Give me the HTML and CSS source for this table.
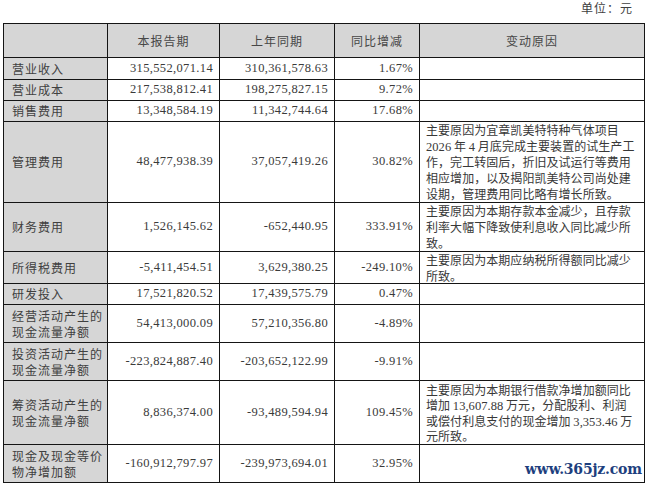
FILE: index.html
```html
<!DOCTYPE html>
<html lang="zh-CN">
<head>
<meta charset="utf-8">
<title>财务数据变动</title>
<link rel="stylesheet" href="styles.css">
</head>
<body>
<div class="page">
  <div class="unit">单位：元</div>
  <table class="fin">
    <colgroup>
      <col class="c1"><col class="c2"><col class="c3"><col class="c4"><col class="c5">
    </colgroup>
    <tr class="h-head">
      <th class="lab"></th><th>本报告期</th><th>上年同期</th><th>同比增减</th><th>变动原因</th>
    </tr>
    <tr class="h22">
      <td class="lab">营业收入</td><td class="num">315,552,071.14</td><td class="num">310,361,578.63</td><td class="num">1.67%</td><td class="why"></td>
    </tr>
    <tr class="h21">
      <td class="lab">营业成本</td><td class="num">217,538,812.41</td><td class="num">198,275,827.15</td><td class="num">9.72%</td><td class="why"></td>
    </tr>
    <tr class="h21">
      <td class="lab">销售费用</td><td class="num">13,348,584.19</td><td class="num">11,342,744.64</td><td class="num">17.68%</td><td class="why"></td>
    </tr>
    <tr class="h81">
      <td class="lab">管理费用</td><td class="num">48,477,938.39</td><td class="num">37,057,419.26</td><td class="num">30.82%</td>
      <td class="why">主要原因为宜章凯美特特种气体项目<br><span class="d">2026</span> 年 <span class="d">4</span> 月底完成主要装置的试生产工<br>作，完工转固后，折旧及试运行等费用<br>相应增加，以及揭阳凯美特公司尚处建<br>设期，管理费用同比略有增长所致。</td>
    </tr>
    <tr class="h49">
      <td class="lab">财务费用</td><td class="num">1,526,145.62</td><td class="num">-652,440.95</td><td class="num">333.91%</td>
      <td class="why">主要原因为本期存款本金减少，且存款<br>利率大幅下降致使利息收入同比减少所<br>致。</td>
    </tr>
    <tr class="h32">
      <td class="lab">所得税费用</td><td class="num">-5,411,454.51</td><td class="num">3,629,380.25</td><td class="num">-249.10%</td>
      <td class="why mid">主要原因为本期应纳税所得额同比减少<br>所致。</td>
    </tr>
    <tr class="h21">
      <td class="lab">研发投入</td><td class="num">17,521,820.52</td><td class="num">17,439,575.79</td><td class="num">0.47%</td><td class="why"></td>
    </tr>
    <tr class="h38">
      <td class="lab">经营活动产生的<br>现金流量净额</td><td class="num">54,413,000.09</td><td class="num">57,210,356.80</td><td class="num">-4.89%</td><td class="why"></td>
    </tr>
    <tr class="h38">
      <td class="lab">投资活动产生的<br>现金流量净额</td><td class="num">-223,824,887.40</td><td class="num">-203,652,122.99</td><td class="num">-9.91%</td><td class="why"></td>
    </tr>
    <tr class="h64">
      <td class="lab">筹资活动产生的<br>现金流量净额</td><td class="num">8,836,374.00</td><td class="num">-93,489,594.94</td><td class="num">109.45%</td>
      <td class="why mid">主要原因为本期银行借款净增加额同比<br>增加 <span class="d">13,607.88</span> 万元，分配股利、利润<br>或偿付利息支付的现金增加 <span class="d">3,353.46</span> 万<br>元所致。</td>
    </tr>
    <tr class="h38">
      <td class="lab">现金及现金等价<br>物净增加额</td><td class="num">-160,912,797.97</td><td class="num">-239,973,694.01</td><td class="num">32.95%</td><td class="why"></td>
    </tr>
  </table>
  <div class="mark">www.365jz.com</div>
</div>
</body>
</html>
```
FILE: styles.css
```css
html, body {
  margin: 0;
  padding: 0;
  background: #ffffff;
}
.page {
  position: relative;
  width: 648px;
  height: 486px;
  padding-left: 3px;
  box-sizing: border-box;
  font-family: "Noto Sans CJK SC", "Noto Sans", sans-serif;
  color: #404040;
  font-size: 12px;
}
.unit {
  height: 23px;
  line-height: 16px;
  text-align: right;
  padding-right: 15px;
  letter-spacing: 1px;
  color: #404040;
}
.fin {
  border-collapse: collapse;
  table-layout: fixed;
  width: 641px;
}
.c1 { width: 104px; }
.c2 { width: 112px; }
.c3 { width: 115px; }
.c4 { width: 85px; }
.c5 { width: 225px; }
.fin th, .fin td {
  border: 1px solid #151515;
  padding: 0;
  line-height: 15.5px;
  vertical-align: middle;
  white-space: nowrap;
  overflow: hidden;
}
.fin th {
  background: #d6d6d6;
  font-weight: normal;
  text-align: center;
  color: #474747;
  letter-spacing: 1px;
}
.fin td.lab {
  background: #d6d6d6;
  padding-left: 8px;
  text-align: left;
  letter-spacing: 1px;
}
.fin td.num {
  text-align: right;
  padding-right: 6px;
  font-family: "Liberation Serif", "Noto Sans CJK SC", serif;
  font-size: 12.5px;
  letter-spacing: 0.35px;
  color: #3a3a3a;
}
.fin td.why {
  padding-left: 6px;
  text-align: left;
  letter-spacing: 0.05px;
  color: #383838;
  line-height: 16px;
}
.fin td.why.mid { line-height: 15.5px; }
.d {
  font-family: "Liberation Serif", serif;
  font-size: 12.5px;
  line-height: 1;
}
.h-head { height: 34px; }
.h22 { height: 22px; }
.h21 { height: 21px; }
.h81 { height: 81px; }
.h49 { height: 49px; }
.h32 { height: 32px; }
.h38 { height: 38px; }
.h64 { height: 64px; }
.mark {
  position: absolute;
  left: 525px;
  top: 461px;
  font-family: "DejaVu Serif", serif;
  font-weight: bold;
  font-size: 14px;
  color: #1e3f7e;
  letter-spacing: -0.2px;
}
```
